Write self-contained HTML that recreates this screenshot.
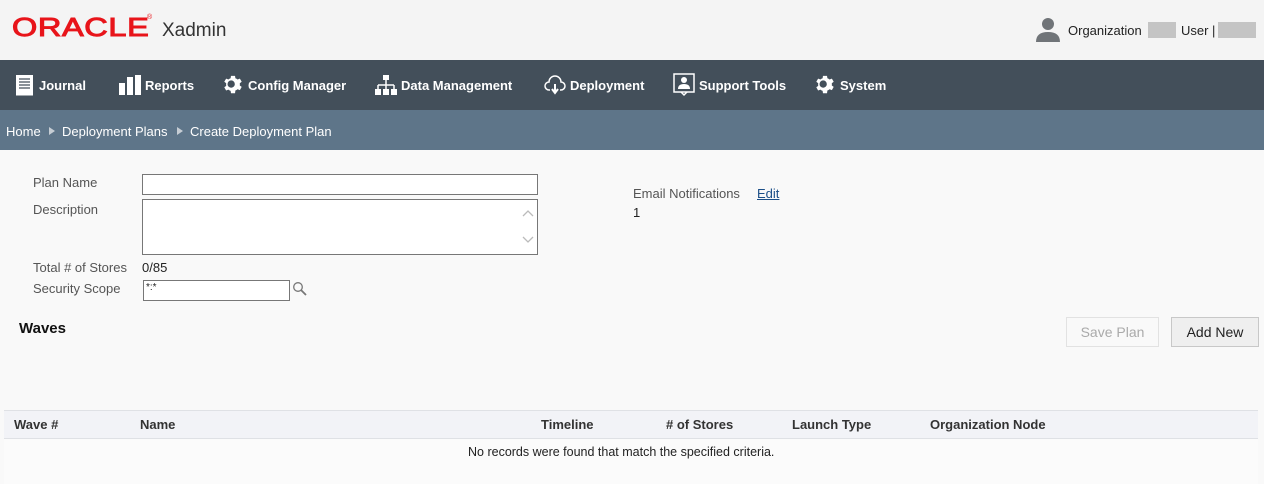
<!DOCTYPE html>
<html><head><style>
*{margin:0;padding:0;box-sizing:border-box}
body{width:1264px;height:484px;overflow:hidden;background:#f9f9f9;font-family:"Liberation Sans",Arial,sans-serif;font-size:13px;color:#333;position:relative}
.a{position:absolute;white-space:nowrap}
#hdr{position:absolute;left:0;top:0;width:1264px;height:60px;background:#f4f4f4}
#nav{position:absolute;left:0;top:60px;width:1264px;height:50px;background:#434f5a}
#bc{position:absolute;left:0;top:110px;width:1264px;height:40px;background:#5e7589}
.ni{position:absolute;top:0;height:50px;display:flex;align-items:center;color:#fff;font-weight:bold;font-size:13px;letter-spacing:0}
.ni svg{margin-right:4px}
.bct{color:#fff;font-size:13px;top:124px}
.tri{position:absolute;top:127px;width:0;height:0;border-left:6px solid #c6cdd4;border-top:4px solid transparent;border-bottom:4px solid transparent}
.lbl{color:#555;font-size:13px}
.inp{position:absolute;background:#fff;border:1px solid #777}
.btn{position:absolute;border:1px solid #ccc;font-size:14px;display:flex;align-items:center;justify-content:center}
.th{position:absolute;top:417px;font-weight:bold;color:#333;font-size:13px}
</style></head><body>
<div id="hdr">
 <div class="a" style="left:12px;top:12px;font-size:26px;font-weight:normal;color:#e8141a;-webkit-text-stroke:1px #e8141a;letter-spacing:0.5px;transform:scaleX(1.25);transform-origin:left">ORACLE</div>
 <div class="a" style="left:147px;top:14px;font-size:7px;color:#e8141a">®</div>
 <div class="a" style="left:162px;top:20px;font-size:19px;color:#333">Xadmin</div>
 <svg class="a" style="left:1035px;top:17px" width="26" height="26" viewBox="0 0 26 26"><circle cx="13" cy="7" r="6" fill="#707478"/><path d="M1 25 Q1 15 13 15 Q25 15 25 25Z" fill="#707478"/></svg>
 <div class="a" style="left:1068px;top:23px;color:#222">Organization</div>
 <div class="a" style="left:1148px;top:22px;width:28px;height:16px;background:#c4c4c4"></div>
 <div class="a" style="left:1181px;top:23px;color:#222">User |</div>
 <div class="a" style="left:1218px;top:22px;width:38px;height:16px;background:#c4c4c4"></div>
</div>
<div id="nav">
 <div class="ni" style="left:15px"><svg width="20" height="22" viewBox="0 0 20 22"><rect x="1" y="1" width="17" height="19" fill="#fff"/><path d="M4 5h11M4 8h11M4 11h11M4 14h11" stroke="#434f5a" stroke-width="1.3"/><rect x="1" y="20" width="17" height="1.5" fill="#fff"/></svg>Journal</div>
 <div class="ni" style="left:119px"><svg width="22" height="20" viewBox="0 0 22 20"><rect x="0" y="8" width="6" height="12" fill="#fff"/><rect x="8" y="2" width="6" height="18" fill="#fff"/><rect x="16" y="0" width="6" height="20" fill="#fff"/></svg>Reports</div>
 <div class="ni" style="left:222px"><svg width="22" height="22" viewBox="0 0 24 24"><path fill="#fff" d="M12 8a4 4 0 1 0 0 8 4 4 0 0 0 0-8zm9.4 5.5 2.1 1.6-2 3.5-2.5-1a8 8 0 0 1-2.4 1.4L16.2 22h-4.4l-.4-2.6a8 8 0 0 1-2.4-1.4l-2.5 1-2-3.5 2.1-1.600a8 8 0 0 1 0-2.8L4.5 9.5l2-3.5 2.5 1a8 8 0 0 1 2.4-1.4L11.8 3h4.4l.4 2.6A8 8 0 0 1 19 7l2.5-1 2 3.5-2.1 1.6a8 8 0 0 1 0 2.4z" transform="translate(-2 -1)"/></svg>Config Manager</div>
 <div class="ni" style="left:375px"><svg width="22" height="22" viewBox="0 0 22 22"><rect x="8" y="1" width="6" height="5" fill="#fff"/><path d="M11 6v5M3 11h16M3 11v5M11 11v5M19 11v5" stroke="#fff" stroke-width="1.5" fill="none"/><rect x="0" y="15" width="6" height="6" fill="#fff"/><rect x="8" y="15" width="6" height="6" fill="#fff"/><rect x="16" y="15" width="6" height="6" fill="#fff"/></svg>Data Management</div>
 <div class="ni" style="left:544px"><svg width="22" height="22" viewBox="0 0 22 22"><path d="M6 16H5a4 4 0 0 1 0-8 6 6 0 0 1 12 0 4 4 0 0 1 0 8h-1" stroke="#fff" stroke-width="1.5" fill="none"/><path d="M11 10v8M8 15l3 4 3-4" stroke="#fff" stroke-width="2" fill="none"/></svg>Deployment</div>
 <div class="ni" style="left:673px"><svg width="22" height="24" viewBox="0 0 22 24"><rect x="1" y="1" width="20" height="18" fill="none" stroke="#fff" stroke-width="1.5"/><circle cx="11" cy="7" r="3" fill="#fff"/><path d="M5 16q0-5 6-5t6 5z" fill="#fff"/><path d="M8 19l3 3 3-3" fill="none" stroke="#fff" stroke-width="1.5"/></svg>Support Tools</div>
 <div class="ni" style="left:814px"><svg width="22" height="22" viewBox="0 0 24 24"><path fill="#fff" d="M12 8a4 4 0 1 0 0 8 4 4 0 0 0 0-8zm9.4 5.5 2.1 1.6-2 3.5-2.5-1a8 8 0 0 1-2.4 1.4L16.2 22h-4.4l-.4-2.6a8 8 0 0 1-2.4-1.4l-2.5 1-2-3.5 2.1-1.6a8 8 0 0 1 0-2.8L4.5 9.5l2-3.5 2.5 1a8 8 0 0 1 2.4-1.4L11.8 3h4.4l.4 2.6A8 8 0 0 1 19 7l2.5-1 2 3.5-2.1 1.6a8 8 0 0 1 0 2.4z" transform="translate(-2 -1)"/></svg>System</div>
</div>
<div id="bc"></div>
<div class="a bct" style="left:6px">Home</div>
<div class="tri" style="left:49px"></div>
<div class="a bct" style="left:62px">Deployment Plans</div>
<div class="tri" style="left:177px"></div>
<div class="a bct" style="left:190px">Create Deployment Plan</div>

<div class="a lbl" style="left:33px;top:175px">Plan Name</div>
<div class="inp" style="left:142px;top:174px;width:396px;height:21px"></div>
<div class="a lbl" style="left:33px;top:202px">Description</div>
<div class="inp" style="left:142px;top:199px;width:396px;height:56px"></div>
<svg class="a" style="left:521px;top:207px" width="14" height="40" viewBox="0 0 14 40"><path d="M2 9l5-5 5 5M2 30l5 5 5-5" stroke="#bbb" stroke-width="1.3" fill="none"/></svg>
<div class="a lbl" style="left:33px;top:260px">Total # of Stores</div>
<div class="a" style="left:142px;top:260px;color:#222">0/85</div>
<div class="a lbl" style="left:33px;top:281px">Security Scope</div>
<div class="inp" style="left:143px;top:280px;width:147px;height:21px"></div>
<div class="a" style="left:146px;top:282px;font-size:10px;color:#222">*:*</div>
<svg class="a" style="left:292px;top:281px" width="16" height="16" viewBox="0 0 16 16"><circle cx="6" cy="6" r="4.3" stroke="#777" stroke-width="1.3" fill="none"/><path d="M9 9l5 5" stroke="#777" stroke-width="1.8"/></svg>

<div class="a lbl" style="left:633px;top:186px">Email Notifications</div>
<div class="a" style="left:757px;top:186px;color:#1c4f88;text-decoration:underline">Edit</div>
<div class="a" style="left:633px;top:205px;color:#222">1</div>

<div class="a" style="left:19px;top:320px;font-weight:bold;font-size:15px;color:#111">Waves</div>
<div class="btn" style="left:1066px;top:317px;width:93px;height:30px;background:#f9f9f9;border-color:#e2e2e2;color:#aaa">Save Plan</div>
<div class="btn" style="left:1171px;top:317px;width:88px;height:30px;background:#efefef;border-color:#c8c8c8;color:#222">Add New</div>

<div class="a" style="left:4px;top:410px;width:1254px;height:29px;background:#f2f3f7;border-top:1px solid #dfe1e5;border-bottom:1px solid #dfe1e5"></div>
<div class="a" style="left:4px;top:439px;width:1254px;height:45px;background:#fbfbfb"></div>
<div class="a th" style="left:14px">Wave #</div>
<div class="a th" style="left:140px">Name</div>
<div class="a th" style="left:541px">Timeline</div>
<div class="a th" style="left:666px"># of Stores</div>
<div class="a th" style="left:792px">Launch Type</div>
<div class="a th" style="left:930px">Organization Node</div>
<div class="a" style="left:468px;top:445px;color:#222;font-size:12.5px">No records were found that match the specified criteria.</div>
</body></html>
